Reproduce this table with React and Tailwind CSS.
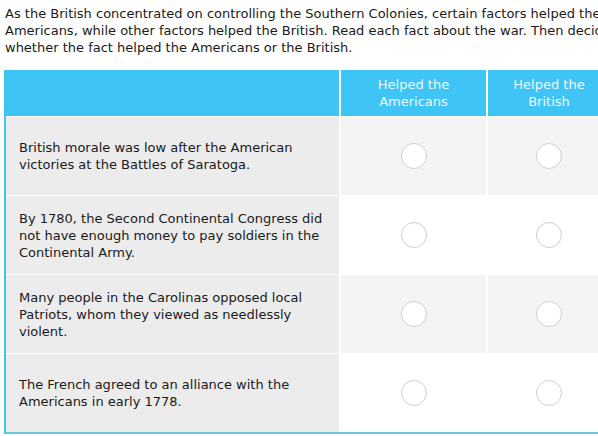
import React from 'react'

const facts = [
  'British morale was low after the American victories at the Battles of Saratoga.',
  'By 1780, the Second Continental Congress did not have enough money to pay soldiers in the Continental Army.',
  'Many people in the Carolinas opposed local Patriots, whom they viewed as needlessly violent.',
  'The French agreed to an alliance with the Americans in early 1778.',
]

function Radio() {
  return <div className="w-[26px] h-[26px] rounded-full border border-[#cfcfcf] bg-white" />
}

export default function App() {
  return (
    <div className="w-[598px] h-[436px] overflow-hidden bg-white text-[13px] leading-[17px] text-[#1a1a1a]" style={{ fontFamily: '"DejaVu Sans", Verdana, sans-serif' }}>
      <div className="w-[640px]">
        <p className="pl-[5px] pt-[5px] w-[635px]">
          As the British concentrated on controlling the Southern Colonies, certain factors helped the Americans, while other factors helped the British. Read each fact about the war. Then decide whether the fact helped the Americans or the British.
        </p>

        <div className="ml-[4px] mt-[14px] w-[608px] border-l-2 border-b-2 border-l-[#45c2ec] border-b-[#6ac6d9]">
          <div className="grid grid-cols-[333px_145px_122px] gap-x-[2px] gap-y-px bg-white">
            <div className="h-[46px] bg-[#3fc4f6]" />
            <div className="h-[46px] bg-[#3fc4f6] text-white/90 flex items-center justify-center text-center">
              Helped the<br />Americans
            </div>
            <div className="h-[46px] bg-[#3fc4f6] text-white/90 flex items-center justify-center text-center">
              Helped the<br />British
            </div>

            {facts.map((fact, i) => (
              <React.Fragment key={i}>
                <div className="h-[78px] bg-[#ececec] flex items-center pl-[13px] pr-3">
                  <p>{fact}</p>
                </div>
                <div className={`h-[78px] flex items-center justify-center ${i % 2 === 0 ? 'bg-[#f4f4f4]' : 'bg-white'}`}>
                  <Radio />
                </div>
                <div className={`h-[78px] flex items-center justify-center ${i % 2 === 0 ? 'bg-[#f4f4f4]' : 'bg-white'}`}>
                  <Radio />
                </div>
              </React.Fragment>
            ))}
          </div>
        </div>
      </div>
    </div>
  )
}
